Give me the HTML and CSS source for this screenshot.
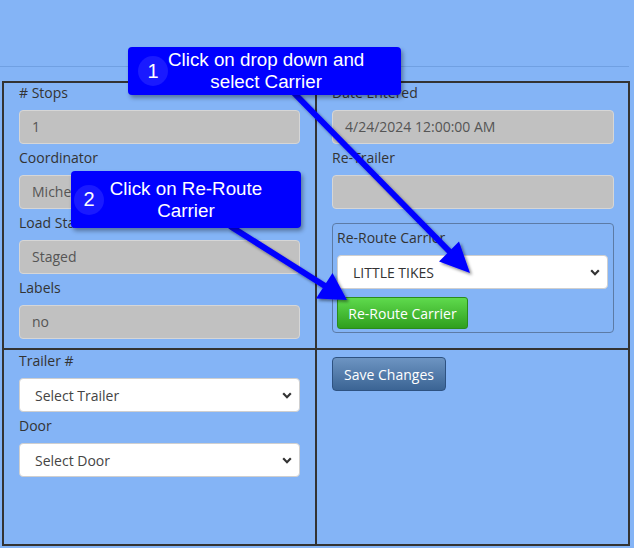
FILE: index.html
```html
<!DOCTYPE html>
<html>
<head>
<meta charset="utf-8">
<title>Load</title>
<link rel="stylesheet" href="styles.css">
</head>
<body>
<div class="page">
  <div class="topbar"></div>
  <div class="grid">
    <div class="cell cell-tl">
      <div class="label">#&nbsp;Stops</div>
      <div class="input">1</div>
      <div class="label">Coordinator</div>
      <div class="input">Michelle</div>
      <div class="label">Load Status</div>
      <div class="input">Staged</div>
      <div class="label">Labels</div>
      <div class="input">no</div>
    </div>
    <div class="cell cell-tr">
      <div class="label">Date Entered</div>
      <div class="input">4/24/2024 12:00:00 AM</div>
      <div class="label">Re-Trailer</div>
      <div class="input"></div>
      <div class="fieldset">
        <div class="label">Re-Route Carrier</div>
        <div class="select select-carrier">
          <span>LITTLE TIKES</span>
          <svg class="chev" width="10" height="7" viewBox="0 0 10 7"><path d="M1.2 1.3 L5 5.2 L8.8 1.3" fill="none" stroke="#333" stroke-width="2.2"/></svg>
        </div>
        <div class="btn btn-green">Re-Route Carrier</div>
      </div>
    </div>
    <div class="cell cell-bl">
      <div class="label">Trailer #</div>
      <div class="select">
        <span>Select Trailer</span>
        <svg class="chev" width="10" height="7" viewBox="0 0 10 7"><path d="M1.2 1.3 L5 5.2 L8.8 1.3" fill="none" stroke="#333" stroke-width="2.2"/></svg>
      </div>
      <div class="label">Door</div>
      <div class="select">
        <span>Select Door</span>
        <svg class="chev" width="10" height="7" viewBox="0 0 10 7"><path d="M1.2 1.3 L5 5.2 L8.8 1.3" fill="none" stroke="#333" stroke-width="2.2"/></svg>
      </div>
    </div>
    <div class="cell cell-br">
      <div class="btn btn-blue">Save Changes</div>
    </div>
  </div>

  <svg class="arrows" width="634" height="548" viewBox="0 0 634 548">
    <defs>
      <filter id="sh" x="-20%" y="-20%" width="140%" height="140%">
        <feDropShadow dx="2" dy="2" stdDeviation="1.6" flood-color="#000" flood-opacity="0.45"/>
      </filter>
    </defs>
    <g filter="url(#sh)" fill="#0000ff">
      <line x1="293" y1="92" x2="450" y2="252" stroke="#0000ff" stroke-width="6"/>
      <polygon points="470,273 439,261.5 459,241.5"/>
      <line x1="230" y1="226" x2="325" y2="286" stroke="#0000ff" stroke-width="6"/>
      <polygon points="347,300 316,298.5 332.5,273"/>
    </g>
  </svg>

  <div class="callout c1">
    <div class="num">1</div>
    <div class="ctext">Click on drop down and<br>select Carrier</div>
  </div>
  <div class="callout c2">
    <div class="num">2</div>
    <div class="ctext">Click on Re-Route<br>Carrier</div>
  </div>
</div>
</body>
</html>
```
FILE: styles.css
```css
html,body{margin:0;padding:0;}
body{
  background:#84b4f6;
  font-family:"Open Sans","Liberation Sans",sans-serif;
  font-size:14px;
  color:#333;
  width:634px;
  height:548px;
  overflow:hidden;
}
.page{position:relative;width:634px;height:548px;}
.topbar{
  height:66px;
  width:629px;
  border-bottom:1px solid #70a0e2;
}
.grid{
  margin:14px 0 0 2px;
  width:628px;
  box-sizing:border-box;
  border:1px solid #333;
  display:grid;
  grid-template-columns:313px 313px;
  grid-template-rows:267px 196px;
}
.cell{
  border:1px solid #333;
  box-sizing:border-box;
  padding:0 15px;
  display:flex;
  flex-direction:column;
  align-items:stretch;
}
.cell-tr{padding:0 14px 0 15px;}
.cell-bl,.cell-br{padding-top:1px;}
.label{
  line-height:20px;
  height:20px;
  white-space:nowrap;
  color:#333;
}
.input{
  margin-top:7px;
  margin-bottom:4px;
  height:34px;
  box-sizing:border-box;
  background:#c1c1c1;
  border:1px solid #d6d6d6;
  border-radius:4px;
  padding:0 12px;
  line-height:32px;
  color:#555;
}
.select{
  margin-top:7px;
  margin-bottom:4px;
  height:34px;
  box-sizing:border-box;
  background:#fff;
  border:1px solid #cfcfcf;
  border-radius:4px;
  padding:0 7px 0 15px;
  display:flex;
  align-items:center;
  justify-content:space-between;
  color:#444;
}
.fieldset{
  margin-top:10px;
  border:1px solid #5c7ba6;
  border-radius:4px;
  padding:4px 5px 3px 4px;
  display:flex;
  flex-direction:column;
  align-items:flex-start;
}
.fieldset .select{align-self:stretch;margin-bottom:0;color:#333;}
.chev{display:block;}
.btn{
  box-sizing:border-box;
  color:#fff;
  border-radius:4px;
  display:flex;
  align-items:center;
  justify-content:center;
  white-space:nowrap;
}
.btn-green{
  margin-top:8px;
  width:131px;
  height:32px;
  background:linear-gradient(#5fda4d,#2f9f1e);
  border:1px solid #2a8c1b;
  border-radius:3px;
}
.btn-blue{
  margin-top:6px;
  width:114px;
  height:34px;
  background:linear-gradient(#6d94c2,#3b6494);
  border:1px solid #2e5281;
}
.arrows{position:absolute;left:0;top:0;pointer-events:none;}
.callout{
  position:absolute;
  background:#0000ff;
  border-radius:4px;
  box-shadow:2px 3px 4px rgba(0,0,0,0.35);
  display:flex;
  align-items:center;
  color:#fff;
  font-family:"Liberation Sans",Arial,sans-serif;
  box-sizing:border-box;
}
.c1{left:128px;top:47px;width:273px;height:48px;padding-left:10px;}
.c2{left:71px;top:171px;width:230px;height:57px;padding-left:3px;}
.num{
  width:30px;
  height:30px;
  flex:none;
  border-radius:50%;
  background:#1a1aff;
  display:flex;
  align-items:center;
  justify-content:center;
  font-size:20px;
}
.ctext{
  flex:1;
  text-align:center;
  font-size:18.8px;
  line-height:22px;
  white-space:nowrap;
}
.c1 .ctext{margin-right:42px;}
.c2 .ctext{margin-right:33px;}
```
